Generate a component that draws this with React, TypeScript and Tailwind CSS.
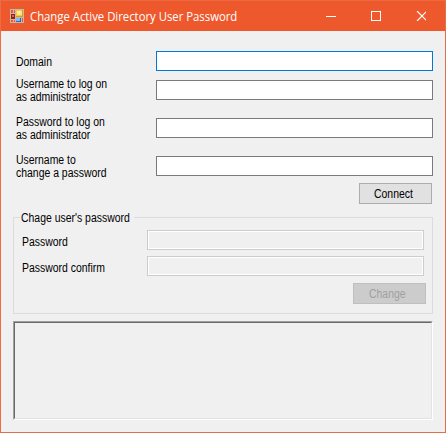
import type { ReactNode } from "react";

function Text({ children, className = "" }: { children: ReactNode; className?: string }) {
  return (
    <span className={`block origin-left scale-x-[0.87] whitespace-nowrap ${className}`}>{children}</span>
  );
}

function Field({ lines, focused = false }: { lines: string[]; focused?: boolean }) {
  return (
    <div className="flex h-5 items-center">
      <label className="w-[140px] shrink-0 pt-0.5">
        {lines.map((line) => (
          <Text key={line}>{line}</Text>
        ))}
      </label>
      <input
        className={`h-5 w-[277px] border bg-white px-1 outline-none ${focused ? "border-[#0078d7]" : "border-[#7a7a7a]"}`}
      />
    </div>
  );
}

function DisabledField({ label }: { label: string }) {
  return (
    <div className="flex h-5 items-center">
      <label className="w-[125px] shrink-0 pt-1">
        <Text>{label}</Text>
      </label>
      <div className="h-5 w-[277px] border border-[#cccccc] bg-[#f0f0f0] shadow-[inset_0_0_0_1px_#fff]" />
    </div>
  );
}

function FormIcon() {
  return (
    <svg width="14" height="14" viewBox="0 0 14 14" shapeRendering="crispEdges">
      <path fill="#c5b9ae" d="M0 0h14v14H0z" />
      <path fill="#ed592d" d="M1 1h2v3H1zM4 1h1v3H4zM1 11h2v2H1zM4 11h1v2H4zM12 9h1v4h-1z" />
      <path fill="#981d14" d="M1 5h4v5H1z" />
      <path fill="#d86350" d="M2 6h2v2H2z" />
      <path fill="#d79b16" d="M6 1h7v7H6z" />
      <path fill="#f5c840" d="M6 1h6v6H6z" />
      <path fill="#ffe681" d="M7 2h5v4H7z" />
      <path fill="#fff2a8" d="M7 2h3v2H7z" />
      <path fill="#2f67bd" d="M6 9h5v4H6z" />
      <path fill="#83b8ff" d="M6 9h4v3H6z" />
    </svg>
  );
}

export default function App() {
  return (
    <div className="flex h-[433px] w-[446px] flex-col border border-b-[#e0704c] border-l-[#f26a42] border-r-[#e0704c] border-t-[#ee6940] bg-[#f0f0f0] font-['Liberation_Sans',sans-serif] text-[12px] leading-[13px] text-black">
      <header className="flex h-[30px] shrink-0 items-center bg-[#ed592d] pl-[9px] text-white">
        <FormIcon />
        <h1 className="ml-[6px] w-[296px] origin-left scale-x-[0.943] whitespace-nowrap pt-px font-['Open_Sans','Noto_Sans',sans-serif] text-[12px] leading-4">
          Change Active Directory User Password
        </h1>
        <svg width="100" height="10" viewBox="0 0 100 10" fill="none" stroke="currentColor">
          <path d="M0 5.5h10" shapeRendering="crispEdges" />
          <rect x="45.5" y="0.5" width="9" height="9" shapeRendering="crispEdges" />
          <path d="M91 0l10 10M101 0l-10 10" strokeWidth="1.15" />
        </svg>
      </header>
      <main className="flex flex-col pl-3 pt-5">
        <div className="flex flex-col pl-[3px]">
          <Field lines={["Domain"]} focused />
          <div className="mt-[9px] flex flex-col gap-[18px]">
            <Field lines={["Username to log on", "as administrator"]} />
            <Field lines={["Password to log on", "as administrator"]} />
            <Field lines={["Username to", "change a password"]} />
          </div>
        </div>
        <button className="ml-[346px] mt-[7px] flex h-[21px] w-[73px] items-center justify-center border border-[#adadad] bg-[#e1e1e1] pl-px pt-0.5">
          <Text className="origin-center">Connect</Text>
        </button>
        <section className="mt-[13px] h-[97px] w-[420px] border border-[#dcdcdc] pl-2">
          <h2 className="-ml-[2px] -mt-[7px] h-[13px] w-[114px] bg-[#f0f0f0] pl-px pt-px">
            <Text>Chage user's password</Text>
          </h2>
          <div className="mt-[6px] flex flex-col gap-[6px]">
            <DisabledField label="Password" />
            <DisabledField label="Password confirm" />
          </div>
          <button
            disabled
            className="ml-[331px] mt-[7px] flex h-[21px] w-[73px] items-center justify-center border border-[#bfbfbf] bg-[#cccccc] pl-px pt-0.5 text-[#a0a0a0]"
          >
            <Text className="origin-center">Change</Text>
          </button>
        </section>
        <div className="mt-[7px] h-[99px] w-[420px] border border-b-white border-l-[#a0a0a0] border-r-white border-t-[#a0a0a0]">
          <div className="h-full border border-b-[#e3e3e3] border-l-[#696969] border-r-[#e3e3e3] border-t-[#696969]" />
        </div>
      </main>
    </div>
  );
}
